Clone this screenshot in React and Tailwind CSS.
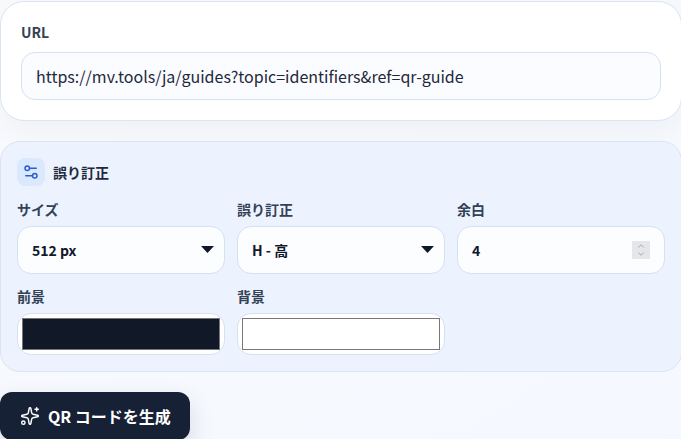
import React from "react";
import { ChevronDown, ChevronUp, Settings2, Sparkles } from "lucide-react";

const fieldLabel = "block mb-[7px] text-[14px] leading-[20px] font-bold text-[#334155]";
const control = "block w-full h-12 rounded-[14px] border border-[#d5e0f0] bg-[#fcfdff] px-[14px] text-[14px] font-bold text-[#0f172a] outline-none";
const colorInput = "block w-full h-[42px] rounded-[14px] border border-[#d5e0f0] bg-white p-1 [&::-webkit-color-swatch-wrapper]:p-0";

function SelectField({ label, value }) {
  return (
    <div>
      <label className={fieldLabel}>{label}</label>
      <div className="relative">
        <select className={`${control} appearance-none`}>
          <option>{value}</option>
        </select>
        <svg width="13" height="7" viewBox="0 0 13 7" className="absolute right-[11px] top-[20px] text-[#0f172a]">
          <path d="M0 0h13L6.5 7z" fill="currentColor" />
        </svg>
      </div>
    </div>
  );
}

export default function App() {
  return (
    <div className="h-[439px] overflow-hidden bg-gradient-to-br from-[#f8fafc] to-[#f5f8ff] font-['Noto_Sans_CJK_JP','Noto_Sans',sans-serif]">
      <div className="flex w-[682px] flex-col gap-5 pt-px">
        <section className="rounded-[24px] border border-[#dbe4f0] bg-white p-5 shadow-[0_10px_30px_rgba(15,23,42,0.04)]">
          <label className="block mb-2.5 text-[14px] leading-[20px] font-bold text-[#334155]">URL</label>
          <input
            readOnly
            value="https://mv.tools/ja/guides?topic=identifiers&ref=qr-guide"
            className="block w-full h-12 rounded-[14px] border border-[#d5e0f0] bg-[#fbfcff] px-[14px] text-[16px] text-[#1e293b] outline-none"
          />
        </section>

        <section className="rounded-[20px] border border-[#dbe4f0] bg-[#ecf3fe] p-4">
          <div className="flex items-center gap-2 mb-[13px]">
            <div className="flex h-7 w-7 items-center justify-center rounded-lg bg-[#dbe9fe]">
              <Settings2 size={18} strokeWidth={2} className="text-[#2b5fd0]" />
            </div>
            <h3 className="text-[14px] leading-[20px] font-bold text-[#1e293b]">誤り訂正</h3>
          </div>

          <div className="grid grid-cols-3 gap-x-3 gap-y-3">
            <SelectField label="サイズ" value="512 px" />
            <SelectField label="誤り訂正" value="H - 高" />
            <div>
              <label className={fieldLabel}>余白</label>
              <div className="relative">
                <input
                  type="number"
                  readOnly
                  value="4"
                  className={`${control} [&::-webkit-inner-spin-button]:appearance-none`}
                />
                <div className="absolute right-[15px] top-[15px] flex h-[18px] w-[18px] flex-col items-center justify-center bg-[#e6e6ea] text-[#9a9aa4]">
                  <ChevronUp size={10} strokeWidth={2} className="-mb-px" />
                  <ChevronDown size={10} strokeWidth={2} className="-mt-px" />
                </div>
              </div>
            </div>
            <div>
              <label className={fieldLabel}>前景</label>
              <input type="color" readOnly value="#111827" className={colorInput} />
            </div>
            <div>
              <label className={fieldLabel}>背景</label>
              <input type="color" readOnly value="#ffffff" className={colorInput} />
            </div>
          </div>
        </section>

        <div>
          <button className="flex h-12 w-[190px] items-center gap-2 rounded-xl bg-[#172136] pl-5 text-[16px] font-bold text-white shadow-[0_10px_24px_rgba(15,23,42,0.14)]">
            <Sparkles size={20} strokeWidth={1.75} />
            QR コードを生成
          </button>
        </div>
      </div>
    </div>
  );
}
